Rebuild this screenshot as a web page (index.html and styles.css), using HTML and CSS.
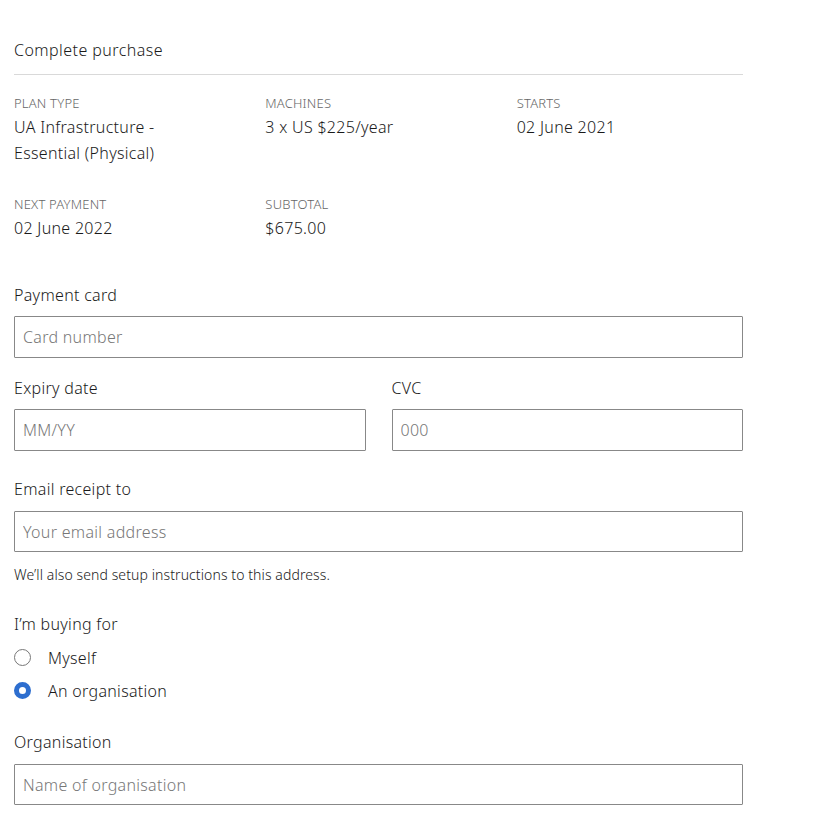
FILE: index.html
```html
<!DOCTYPE html>
<html lang="en">
<head>
<meta charset="utf-8">
<title>Complete purchase</title>
<link rel="stylesheet" href="styles.css">
</head>
<body>
<main class="purchase">
  <h1 class="title">Complete purchase</h1>
  <hr class="rule">

  <dl class="summary">
    <div class="item">
      <dt class="item-label">Plan type</dt>
      <dd class="item-value">UA Infrastructure -<br>Essential (Physical)</dd>
    </div>
    <div class="item">
      <dt class="item-label">Machines</dt>
      <dd class="item-value">3 x US $225/year</dd>
    </div>
    <div class="item">
      <dt class="item-label">Starts</dt>
      <dd class="item-value">02 June 2021</dd>
    </div>
    <div class="item">
      <dt class="item-label">Next payment</dt>
      <dd class="item-value">02 June 2022</dd>
    </div>
    <div class="item">
      <dt class="item-label">Subtotal</dt>
      <dd class="item-value">$675.00</dd>
    </div>
  </dl>

  <form class="form">
    <div class="field field-card">
      <label class="field-label" for="card">Payment card</label>
      <input class="input" id="card" type="text" placeholder="Card number">
    </div>

    <div class="field-row">
      <div class="field">
        <label class="field-label" for="expiry">Expiry date</label>
        <input class="input" id="expiry" type="text" placeholder="MM/YY">
      </div>
      <div class="field">
        <label class="field-label" for="cvc">CVC</label>
        <input class="input" id="cvc" type="text" placeholder="000">
      </div>
    </div>

    <div class="field field-email">
      <label class="field-label" for="email">Email receipt to</label>
      <input class="input" id="email" type="email" placeholder="Your email address">
      <p class="help">We’ll also send setup instructions to this address.</p>
    </div>

    <fieldset class="choice">
      <legend class="field-label">I’m buying for</legend>
      <label class="radio">
        <input class="radio-input" type="radio" name="buyer">
        <span class="radio-mark"></span>
        <span class="radio-text">Myself</span>
      </label>
      <label class="radio">
        <input class="radio-input" type="radio" name="buyer" checked>
        <span class="radio-mark"></span>
        <span class="radio-text">An organisation</span>
      </label>
    </fieldset>

    <div class="field field-org">
      <label class="field-label" for="org">Organisation</label>
      <input class="input" id="org" type="text" placeholder="Name of organisation">
    </div>
  </form>
</main>
</body>
</html>
```

FILE: styles.css
```css
* { box-sizing: border-box; }

html, body {
  margin: 0;
  padding: 0;
  background: #fff;
}

body {
  font-family: "Noto Sans", "Open Sans", sans-serif;
  font-weight: 300;
  color: #1a1a1a;
  font-size: 16px;
  letter-spacing: 0.3px;
}

.purchase {
  width: 729px;
  margin-left: 14px;
  padding-top: 38px;
}

.title {
  margin: 0;
  font-size: 16px;
  line-height: 24px;
  font-weight: 300;
  letter-spacing: 0.45px;
}

.rule {
  margin: 12px 0 0;
  border: 0;
  height: 1px;
  background: #d9d9d9;
}

.summary {
  margin: 20px 0 0;
  display: grid;
  grid-template-columns: repeat(3, 1fr);
  column-gap: 25px;
  row-gap: 30px;
}

.item { min-width: 0; }

.item-label {
  font-size: 13px;
  line-height: 16px;
  text-transform: uppercase;
  color: #666;
  margin: 0 0 3px;
  letter-spacing: 0.2px;
}

.item-value {
  margin: 0;
  font-size: 16px;
  line-height: 26px;
}

.form { margin-top: 42px; }

.field { display: flex; flex-direction: column; }

.field-label {
  font-size: 16px;
  line-height: 24px;
  margin-bottom: 9px;
  padding: 0;
}

.input {
  display: block;
  width: 100%;
  height: 42px;
  border: 1px solid #888;
  border-radius: 1px;
  padding: 0 8px;
  font-family: inherit;
  font-weight: 300;
  font-size: 16px;
  letter-spacing: 0.3px;
  color: #111;
  background: #fff;
  outline: none;
}

.input::placeholder { color: #777; opacity: 1; }

.field-row {
  display: grid;
  grid-template-columns: 1fr 1fr;
  column-gap: 26px;
  margin-top: 18px;
}

.field-email { margin-top: 26px; }
.field-email .field-label { margin-bottom: 10px; }
.field-email .input { height: 41px; }

.help {
  margin: 13px 0 0;
  font-size: 14px;
  line-height: 20px;
  letter-spacing: 0.1px;
}

.choice {
  margin: 27px 0 0;
  padding: 0;
  border: 0;
  min-width: 0;
}

.choice .field-label {
  display: block;
  margin-bottom: 5px;
}

.radio {
  display: flex;
  align-items: center;
  height: 33px;
  cursor: pointer;
}

.radio-input {
  position: absolute;
  opacity: 0;
  width: 0;
  height: 0;
  margin: 0;
}

.radio-mark {
  width: 17px;
  height: 17px;
  border: 1px solid #777;
  border-radius: 50%;
  flex: none;
  background: #fff;
}

.radio-input:checked + .radio-mark {
  border: 5px solid #2d6ecf;
  background: #fff;
}

.radio-text {
  margin-left: 17px;
  font-size: 16px;
}

.field-org { margin-top: 23px; }
.field-org .field-label { margin-bottom: 10px; }
.field-org .input { height: 41px; }
```
